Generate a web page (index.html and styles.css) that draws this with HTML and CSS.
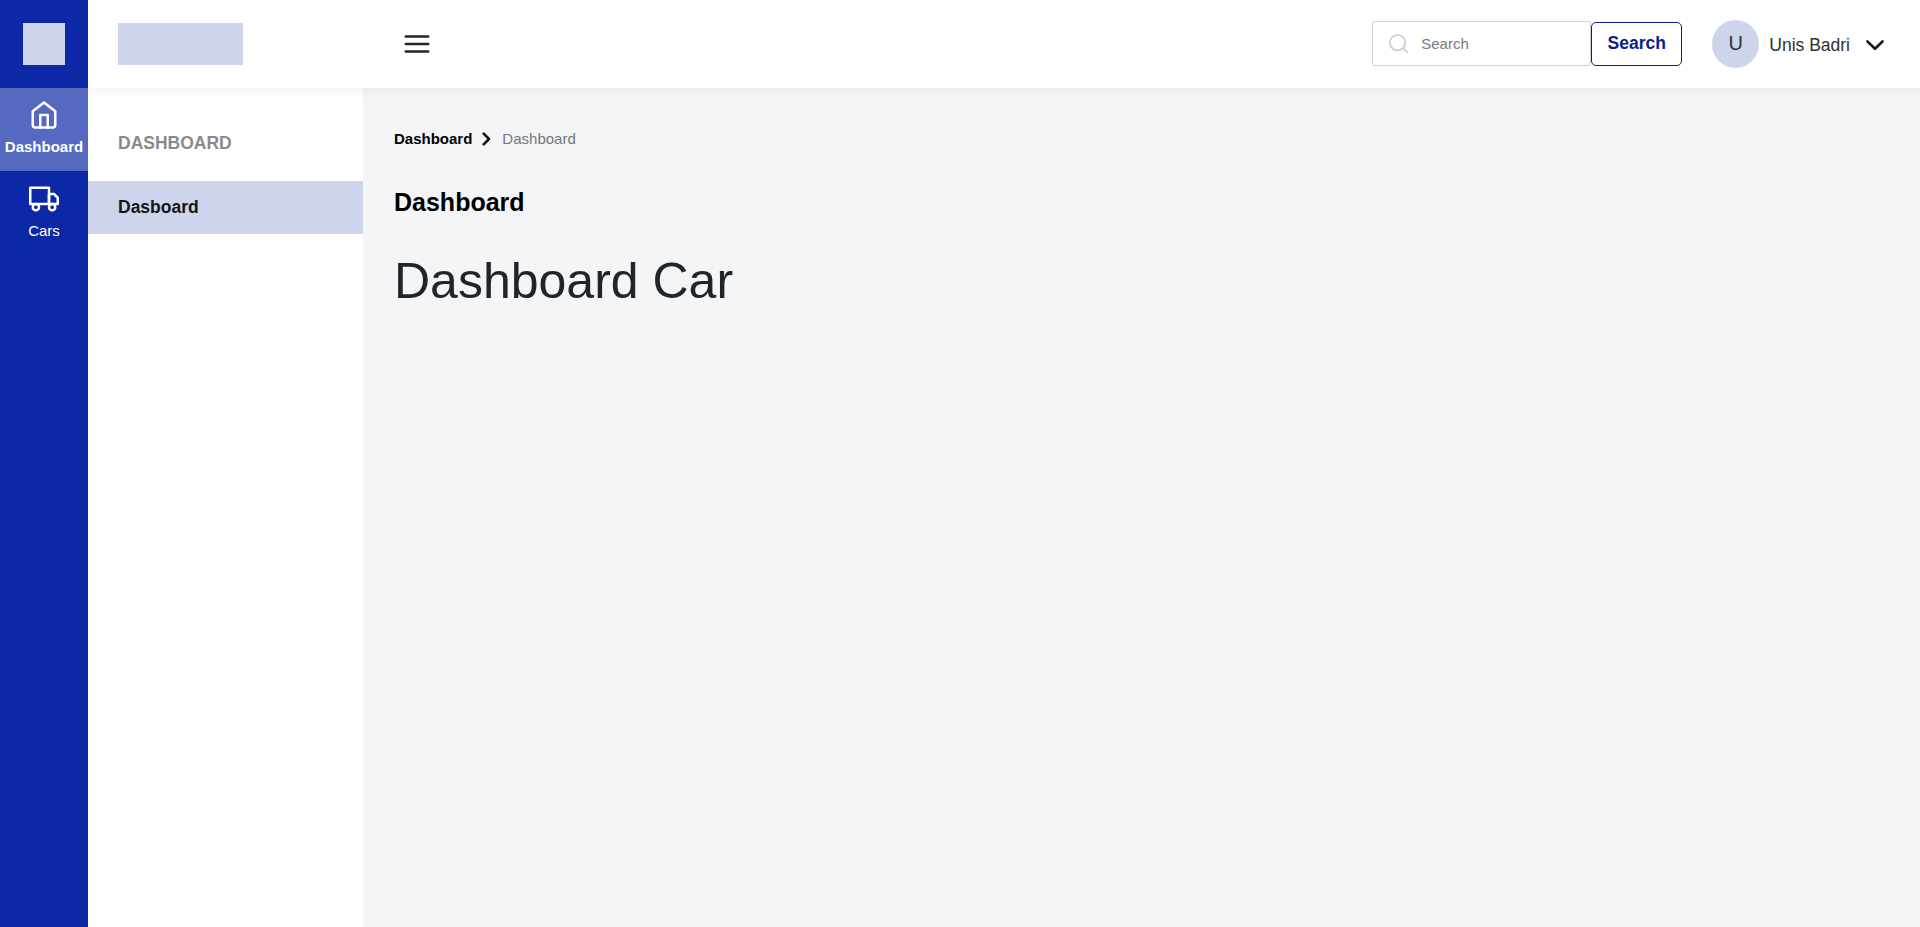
FILE: index.html
```html
<!DOCTYPE html>
<html lang="en">
<head>
<meta charset="utf-8">
<title>Dashboard</title>
<link rel="stylesheet" href="styles.css">
</head>
<body>
<div class="app">
  <nav class="rail">
    <div class="rail-logo"><div class="logo-mark"></div></div>
    <a class="rail-item active">
      <svg class="icon" viewBox="0 0 24 24"><path d="M3 9l9-7 9 7v11a2 2 0 0 1-2 2H5a2 2 0 0 1-2-2z"/><path d="M9 22V12h6v10"/></svg>
      <span>Dashboard</span>
    </a>
    <a class="rail-item cars">
      <svg class="icon" viewBox="0 0 24 24"><path d="M1 3h15v13H1z"/><path d="M16 8h4l3 3v5h-7z"/><circle cx="5.5" cy="18.5" r="2.5"/><circle cx="18.5" cy="18.5" r="2.5"/></svg>
      <span>Cars</span>
    </a>
  </nav>
  <div class="page">
    <header class="topbar">
      <div class="brand"></div>
      <svg class="icon menu" viewBox="0 0 24 24"><path d="M3 12h18M3 6h18M3 18h18"/></svg>
      <form class="search">
        <label class="search-field">
          <svg class="icon search-icon" viewBox="0 0 24 24"><circle cx="11" cy="11" r="8"/><path d="M21 21l-4.35-4.35"/></svg>
          <input class="search-input" type="text" placeholder="Search">
        </label>
        <button class="search-button" type="button">Search</button>
      </form>
      <div class="user">
        <div class="avatar">U</div>
        <span class="user-name">Unis Badri</span>
        <svg class="chevron-down" viewBox="0 0 20 12"><path d="M2.4 2.4l7.6 7.4 7.6-7.4"/></svg>
      </div>
    </header>
    <div class="body">
      <aside class="submenu">
        <div class="submenu-title">DASHBOARD</div>
        <a class="submenu-item">Dasboard</a>
      </aside>
      <main class="content">
        <div class="breadcrumb">
          <b>Dashboard</b>
          <svg class="chevron-right" viewBox="0 0 9 14"><path d="M1.7 1.7L7 7l-5.3 5.3"/></svg>
          <span>Dashboard</span>
        </div>
        <h2 class="heading">Dashboard</h2>
        <h1 class="title">Dashboard Car</h1>
      </main>
    </div>
  </div>
</div>
</body>
</html>
```

FILE: styles.css
```css
* { box-sizing: border-box; }
body {
  margin: 0;
  font-family: "Liberation Sans", Arial, sans-serif;
  color: #212529;
}
.app { display: flex; height: 100vh; overflow: hidden; }
.icon {
  display: block;
  width: 30px;
  height: 30px;
  flex: none;
  fill: none;
  stroke: currentColor;
  stroke-width: 2;
  stroke-linecap: round;
  stroke-linejoin: round;
}
.rail {
  position: relative;
  z-index: 1;
  width: 88px;
  flex: none;
  background: #0d28a6;
  color: #fff;
}
.rail-logo { height: 88px; padding: 23px; }
.logo-mark { width: 42px; height: 42px; background: #cfd4ed; }
.rail-item {
  display: flex;
  flex-direction: column;
  align-items: center;
  gap: 6px;
  height: 83px;
  padding-top: 12px;
  font-size: 15px;
  line-height: 22px;
}
.rail-item.active { background: #5669c1; font-weight: 700; }
.rail-item.cars { padding-top: 13px; }
.page { flex: 1; display: flex; flex-direction: column; }
.topbar {
  position: relative;
  display: flex;
  align-items: center;
  height: 88px;
  flex: none;
  padding: 0 35px 0 30px;
  background: #fff;
  box-shadow: 0 5px 10px rgba(0, 0, 0, .04);
}
.brand { width: 125px; height: 42px; background: #cfd4ed; }
.menu { margin-left: 159px; }
.search { display: flex; align-items: flex-end; margin: 0 0 1px auto; }
.search-field {
  display: flex;
  align-items: center;
  width: 219px;
  height: 45px;
  padding-left: 14px;
  border: 1px solid #ced0d4;
  border-radius: 2px;
}
.search-icon { width: 23px; height: 23px; color: #d0d0d0; }
.search-input {
  width: 150px;
  margin-left: 11px;
  padding: 0;
  border: 0;
  outline: 0;
  background: none;
  font: 15px "Liberation Sans", Arial, sans-serif;
}
.search-input::placeholder { color: #757b81; }
.search-button {
  width: 91px;
  height: 44px;
  padding: 0 0 2px;
  border: 1px solid #0a1f80;
  border-radius: 5px;
  background: #fff;
  color: #0a1f8f;
  font: bold 17.5px "Liberation Sans", Arial, sans-serif;
}
.user { display: flex; align-items: center; margin-left: 30px; }
.avatar {
  width: 47px;
  height: 48px;
  border-radius: 50%;
  background: #cfd4ed;
  color: #303030;
  font-size: 20px;
  line-height: 47px;
  text-align: center;
}
.user-name { margin-left: 10px; padding-top: 2px; font-size: 17.5px; color: #303030; }
.chevron-down, .chevron-right {
  fill: none;
  stroke: #151515;
  stroke-width: 2.6;
  stroke-linecap: round;
  stroke-linejoin: round;
}
.chevron-down { width: 20px; height: 12px; margin: 2px 0 0 15px; }
.body { flex: 1; display: flex; }
.submenu { width: 275px; flex: none; background: #fff; }
.submenu-title {
  padding: 42px 30px 0;
  height: 93px;
  font-size: 17.5px;
  font-weight: 700;
  line-height: 27px;
  color: #8a8a8a;
}
.submenu-item {
  display: block;
  height: 53px;
  padding-left: 30px;
  background: #cfd4ed;
  color: #151515;
  font-size: 17.5px;
  font-weight: 700;
  line-height: 52px;
}
.content { flex: 1; padding: 39px 31px; background: #f4f5f7; }
.breadcrumb {
  display: flex;
  align-items: center;
  height: 22px;
  font-size: 15px;
  color: #73787e;
}
.breadcrumb b { color: #000; }
.chevron-right { width: 9px; height: 14px; margin: 2px 11px 0 10px; }
.heading { margin: 38px 0 0; font-size: 25px; line-height: 30px; color: #000; }
.title { margin: 34px 0 0; font-size: 50px; font-weight: 400; line-height: 60px; }
```
